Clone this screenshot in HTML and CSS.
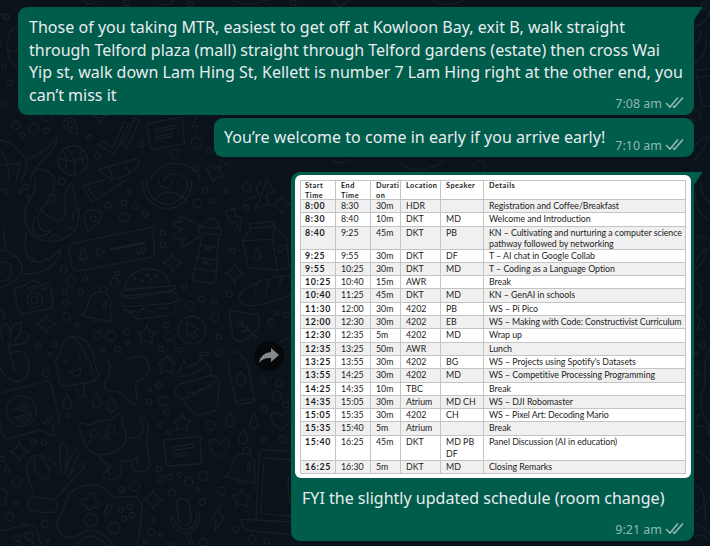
FILE: index.html
```html
<!DOCTYPE html>
<html lang="en">
<head>
<meta charset="utf-8">
<title>Chat</title>
<link rel="stylesheet" href="styles.css">
</head>
<body>
<svg class="wallpaper" width="710" height="546" viewBox="0 0 710 546" aria-hidden="true">
  <defs>
    <path id="spark" d="M0-30Q4-6 30 0Q5 6 0 30Q-5 6-30 0Q-5-6 0-30Z"/>
    <path id="star" d="M0-27L9-10L27-8L15 7L18 26L0 18L-18 25L-14 6L-27-7L-8-10Z"/>
    <path id="drop" d="M0-22Q-15 2-13 10Q-10 22 0 22Q13 20 13 8Q12-2 0-22Z"/>
    <path id="bolt" d="M6-40L-20 6L-5 5L-10 40L20-8L4-7Z"/>
    <path id="bell" d="M-60 30Q-40 18-38-5Q-32-40 0-40Q30-36 30-8Q26 20 32 50ZM-26 40Q-18 56-2 46M-4-40a12 12 0 1 1 16 4M12-14Q20-20 18 0Q12 18 8 4Z"/>
    <path id="heart" d="M0 30Q-34 4-28-14Q-16-34 2-12Q20-34 32-16Q36 4 0 30Z"/>
    <path id="ticks" d="M-16 2L-6 12L8-14M0 8L4 12L18-14"/>
  </defs>
  <g transform="scale(.33333)">
    <path d="M52 80Q22 84 22 150Q26 190 54 202M0 128Q10 132 0 142M20 148Q40 160 54 146M0 46Q20 36 28 50Q20 62 8 54M250 0Q262 22 290 4M480 10Q510 24 520 0M700 2Q760 24 800 0M1000 0L1020 20L1050 0M1300 4Q1340 24 1390 0"/>
    <path d="M190 368Q196 350 216 354Q236 364 232 404Q194 396 190 368ZM202 374a10 10 0 1 0 20 0a10 10 0 1 0-20 0M294 434L308 422L338 444L372 366L386 372L344 462ZM362 430L374 424L404 354L418 360L380 446ZM442 372L550 350L546 364L554 430L462 448Q450 448 450 436L440 382ZM462 390L526 376L528 384L464 398ZM468 410L514 400L516 408L470 418ZM590 350L576 380L596 378L584 400"/>
    <circle cx="219" cy="482" r="44"/><path d="M176 476Q220 490 262 470M200 442Q230 476 224 526M188 450Q210 490 190 512M248 450Q234 470 256 500M0 420Q40 426 64 462L80 480Q130 460 172 412Q170 450 120 490Q98 510 92 540M76 482Q90 506 62 540M0 450Q30 490 26 540M104 510Q140 500 164 536M0 496L60 490L50 540M292 510L400 478Q424 476 416 494Q390 530 336 538ZM326 504L340 538M376 488L388 520M450 540Q480 480 540 492Q590 500 602 540M490 540Q520 502 560 540"/>
    <path d="M620 508l14-14l8 12l22-8l-6 18l14 14l-22 2l-12 12l-8-20ZM660 480l30 20M1000 484Q1030 494 1050 480M1200 490Q1260 530 1330 484M1420 500a18 18 0 1 0 36 0a18 18 0 1 0-36 0"/>
    <use href="#spark" x="298" y="342"/>
    <circle cx="48" cy="375" r="12"/><circle cx="100" cy="385" r="15"/><circle cx="67" cy="406" r="7"/><circle cx="140" cy="392" r="8"/><circle cx="267" cy="412" r="7"/><circle cx="292" cy="469" r="8"/><circle cx="424" cy="433" r="8"/><circle cx="525" cy="460" r="12"/><circle cx="590" cy="429" r="16"/><circle cx="626" cy="452" r="8"/><circle cx="587" cy="506" r="9"/><circle cx="140" cy="348" r="16"/><circle cx="14" cy="312" r="8"/><circle cx="30" cy="248" r="8"/><circle cx="12" cy="198" r="7"/><circle cx="19" cy="50" r="8"/><circle cx="380" cy="8" r="9"/><circle cx="570" cy="12" r="8"/><circle cx="880" cy="8" r="8"/>
    <path d="M2082 82Q2122 70 2130 30M2082 190Q2120 170 2120 110M2080 130Q2106 124 2102 92M2090 210L2130 206M2090 222L2108 320L2130 318M2094 232L2130 228M2082 440Q2108 410 2126 406Q2120 440 2082 480M2074 510Q2092 520 2090 540"/>
    <circle cx="2086" cy="346" r="16"/><circle cx="2112" cy="18" r="9"/>
  </g>
  <g transform="translate(0 180) scale(.33333)">
    <path d="M104 0Q110 30 92 54Q60 98 84 148Q108 184 156 184Q240 180 236 90Q220 50 218 10Q194 14 196 70Q202 110 180 122Q150 118 124 92M164 0Q166 40 130 80Q104 110 120 142Q130 160 152 152Q138 174 110 164Q86 148 106 114M80 154Q68 200 86 238Q130 264 182 206Q170 284 64 282M0 210Q40 210 64 252Q76 300 0 322M0 246Q34 244 36 268Q34 302 0 306M16 144Q6 174 20 208M146 44Q166 40 164 62Q150 74 140 60M110 86Q126 74 130 94M148 178Q164 150 184 180M198 150Q206 134 218 148M232 90Q212 94 220 118M84 228Q100 226 104 248M130 246Q140 228 148 242M36 232Q48 222 60 242"/>
    <path d="M310 0L248 18L276 66L378 0M264 24L286 52M428 0a72 76 0 0 0 146 16V0M440 0a60 64 0 0 0 122 14V0M476 0a19 19 0 0 0 40 6V0M466 64Q474 36 510 36Q548 40 558 66M750 56L778 44L768 26L786 0M800 0L824 36L800 44L806 74L764 86L780 60Z"/>
    <path d="M264 156Q248 112 256 98Q278 80 304 100Q308 122 264 156ZM272 116a8 8 0 1 0 16 0a8 8 0 1 0-16 0M218 190L464 140L458 158L464 220Q462 230 450 232L232 274Q220 274 216 260L206 204Q206 194 218 190ZM240 210q8-12 16 0l2 24q-8 10-14 0ZM236 230Q246 252 268 228M252 246L256 258M288 204L316 214L294 232ZM332 206L434 186L434 190L332 210ZM408 212l8 12l10-20M420 214l8 8l10-20"/>
    <path d="M608 140L540 106Q536 118 548 128Q528 122 520 134Q534 146 550 148Q520 156 520 172Q540 180 556 176Q540 192 544 204L602 170M612 140Q612 116 636 116Q656 118 656 144M596 142L660 146Q672 152 660 164L598 158ZM608 162L578 292Q580 306 602 306L638 310Q648 308 648 292L656 164M598 194L654 204M588 232L650 240M582 266L648 274M614 204Q626 190 634 210ZM608 250Q618 236 628 254Z"/>
    <path d="M676 94L704 84L706 106L726 118L720 152L708 126L688 124ZM748 132L820 124L824 138L752 146ZM752 146L728 182L744 264L832 270L868 262L860 178L824 138M728 182L818 178L824 138M818 178L832 270M832 204L854 192L856 206L836 218ZM772 202Q758 220 762 236Q774 246 782 232Q784 218 772 202Z"/>
    <path d="M720 342Q712 370 740 376Q780 382 874 344M720 342Q750 312 770 310L764 344M770 310Q790 292 806 302L798 338M806 302Q822 284 846 290L834 326M846 290Q864 284 874 290"/>
    <path d="M374 328Q374 288 426 268Q500 260 510 318ZM368 332L522 316Q532 324 516 332L380 348Q352 344 368 332ZM366 350L390 356L520 334L540 360L512 370L388 380Q356 378 368 364M370 384Q380 404 396 396Q398 420 430 416L500 408Q530 394 528 376M380 390L414 398L430 384L458 398L474 382L500 386"/>
    <path d="M48 324L76 316L82 306L110 302L124 314L142 308Q152 310 152 320L160 376Q158 384 148 386L66 402Q56 400 54 390L44 336ZM84 322L112 318V326L86 330Z"/><circle cx="104" cy="360" r="23"/><circle cx="104" cy="360" r="10"/><circle cx="132" cy="324" r="7"/>
    <use href="#bell" x="302" y="376"/><use href="#spark" x="518" y="248"/><use href="#spark" x="704" y="280"/><use href="#spark" x="846" y="74"/><use href="#spark" x="138" y="432"/><use href="#star" x="440" y="464"/>
    <circle cx="576" cy="450" r="42"/><path d="M558 426L596 448L582 454L592 472L582 476L572 460L564 470ZM688 392Q748 400 774 404Q790 440 752 464Q716 500 698 470Q694 440 688 392ZM708 418L756 458L774 476M726 420L730 436L710 440M744 434L744 450L724 456M756 466L766 478"/>
    <path d="M8 480Q-4 440 14 430Q34 440 30 480M30 460Q40 430 62 426Q70 450 44 484M44 484Q70 440 88 466Q80 500 24 494M24 490L34 540M34 520Q70 500 84 540M172 540Q170 524 184 518Q180 480 216 468Q270 470 284 540M212 466Q250 490 260 540M236 520L240 540M376 540Q420 520 446 540M484 540L506 526L516 540M596 520Q614 510 628 522Q612 534 596 520M696 520Q704 508 722 524L736 540M524 506q18-8 24 8q-18 6-24-8M820 494L874 474M830 510L874 492M0 384Q14 400 12 420"/>
    <circle cx="372" cy="112" r="14"/><circle cx="323" cy="76" r="9"/><circle cx="371" cy="68" r="8"/><circle cx="407" cy="79" r="9"/><circle cx="436" cy="102" r="8"/><circle cx="388" cy="34" r="6"/><circle cx="592" cy="70" r="13"/><circle cx="634" cy="63" r="7"/><circle cx="615" cy="30" r="8"/><circle cx="679" cy="31" r="7"/><circle cx="740" cy="20" r="13"/><circle cx="738" cy="83" r="8"/><circle cx="489" cy="158" r="8"/><circle cx="489" cy="194" r="8"/><circle cx="697" cy="212" r="8"/><circle cx="191" cy="267" r="10"/><circle cx="213" cy="302" r="14"/><circle cx="256" cy="295" r="7"/><circle cx="351" cy="280" r="7"/><circle cx="343" cy="307" r="13"/><circle cx="193" cy="338" r="8"/><circle cx="242" cy="335" r="8"/><circle cx="198" cy="370" r="9"/><circle cx="200" cy="410" r="11"/><circle cx="232" cy="434" r="6"/><circle cx="553" cy="318" r="8"/><circle cx="606" cy="357" r="9"/><circle cx="571" cy="377" r="13"/><circle cx="643" cy="366" r="7"/><circle cx="688" cy="342" r="9"/><circle cx="645" cy="413" r="12"/><circle cx="657" cy="470" r="8"/><circle cx="498" cy="435" r="8"/><circle cx="507" cy="468" r="14"/><circle cx="380" cy="457" r="9"/><circle cx="333" cy="468" r="15"/><circle cx="292" cy="466" r="12"/><circle cx="383" cy="488" r="6"/><circle cx="352" cy="507" r="8"/><circle cx="308" cy="510" r="6"/><circle cx="482" cy="507" r="8"/><circle cx="657" cy="520" r="10"/><circle cx="813" cy="427" r="10"/><circle cx="831" cy="398" r="6"/><circle cx="860" cy="404" r="8"/><circle cx="115" cy="497" r="7"/><circle cx="164" cy="493" r="8"/><circle cx="150" cy="523" r="6"/><circle cx="79" cy="22" r="8"/><circle cx="60" cy="35" r="5"/><circle cx="84" cy="50" r="5"/><circle cx="185" cy="4" r="10"/><circle cx="17" cy="34" r="8"/>
    <circle cx="404" cy="296" r="4"/><circle cx="426" cy="302" r="4"/><circle cx="442" cy="286" r="4"/><circle cx="470" cy="288" r="4"/><circle cx="454" cy="302" r="4"/>
  </g>
  <g transform="translate(0 360) scale(.33333)">
    <path d="M0 24Q22 62 54 66Q96 54 84 0M38 0Q36 22 48 34M166 0L180 70Q184 80 196 78L276 66Q286 58 280 44L268 0M280 0L296 44Q292 60 276 66M208 34Q226 32 242 24Q244 46 230 48Q218 48 214 34M226 74L234 104Q242 118 254 106L250 72M190 8l10-6M236 0l10 4"/>
    <path d="M320 0Q340 14 322 54Q304 78 320 92Q344 92 360 98Q390 128 402 136Q416 130 406 70Q440 54 448 28Q446 6 440 0M534 46Q530 36 544 28Q540 14 556 8Q548 0 552-6M556 22Q590 18 604-8M534 48Q570 54 624 14Q614-2 600-2M624 14Q644 30 628 48M540 72Q520 84 526 104Q540 124 572 110Q622 80 654 60Q652 44 628 48L540 72M544 116L582 160Q592 168 606 164L648 150Q656 144 656 60M560 106l14-12l10 8l14-14l12 4l14-16l12 2M688 0Q682 20 690 44L708 128Q712 136 722 132L760 126Q768 120 762 108L740 0M708 124L760 116M722 36Q704 58 710 70Q724 82 736 68Q738 54 722 36"/>
    <path d="M0 100L134 64Q150 62 154 78L178 176Q182 190 158 196L164 230L118 210L26 236Q12 238 8 220L0 190M34 150q10-8 22 0M40 172Q66 170 94 156Q94 186 72 188Q52 186 50 172M58 172l6 10l8-12l8 6l6-14"/><circle cx="64" cy="153" r="45"/><circle cx="76" cy="141" r="14"/><circle cx="76" cy="141" r="5"/>
    <use href="#ticks" x="140" y="180"/>
    <path d="M246 230L236 196Q240 184 266 196Q300 178 336 180L354 160Q368 166 368 192Q384 220 376 244Q366 276 310 284Q260 286 246 230ZM376 236Q410 236 422 224Q438 200 416 176Q432 164 442 190Q448 220 438 242L450 310Q450 336 420 336Q396 334 394 318L404 296M296 286Q304 306 324 312Q326 336 310 340Q308 356 330 358Q358 358 362 344L366 300M366 302Q390 306 416 292Q404 312 420 318M336 318q-16 6-8 26M300 228l8 8l10-14l10 14M304 240q14 6 16-6M264 244l12 4M350 222l10-2"/><circle cx="282" cy="221" r="11"/><circle cx="332" cy="209" r="12"/>
    <path d="M494 240L606 228L600 244L604 302Q604 312 594 312L510 318Q500 318 498 306L492 250ZM516 262L578 252Q584 256 578 262L518 272ZM520 284L562 278Q568 282 562 286L522 290Z"/>
    <path d="M104 286Q150 280 180 336Q190 346 182 320Q174 270 184 250Q202 248 202 280L196 340Q210 280 232 266Q242 274 230 300L204 352Q234 310 252 310Q262 320 220 356Q190 392 166 416M104 286Q80 300 80 330Q92 380 102 408M106 290Q98 320 110 336Q130 366 146 352Q158 326 118 286M98 410L164 420Q178 430 166 456Q130 462 92 450Q76 440 90 416Z"/>
    <path d="M210 400Q240 370 290 376Q320 384 344 414Q388 404 412 414Q430 430 426 460L412 558M210 400L172 486Q170 526 206 534Q230 530 256 514Q300 500 340 558M234 558Q240 530 272 528Q310 536 322 558M244 418L262 416L266 398L284 400L284 420L298 426L294 444L278 442L266 452L258 436L246 434ZM324 430L338 436L322 468L312 462Z"/><circle cx="272" cy="480" r="19"/><circle cx="342" cy="504" r="18"/><circle cx="362" cy="450" r="8"/><circle cx="387" cy="441" r="8"/><circle cx="372" cy="476" r="8"/><circle cx="397" cy="466" r="8"/>
    <path d="M0 512L90 494Q106 494 110 510L124 558M36 532q24-12 26 0q0 10-16 12q24 0 16 14M74 520q20-8 26 4q0 14-14 16q-16-4-12-20M84 542q20-2 20 16M62 494q8-8 18-2M0 384Q20 384 20 402Q12 414 20 424Q16 436 0 432M530 430Q528 416 550 416Q568 418 568 434L574 476Q574 494 554 496Q538 494 536 482ZM512 474Q520 516 556 520Q600 512 600 460L590 462Q590 500 558 508Q530 508 522 474ZM558 520L568 550L578 548L570 516M778 280Q780 268 800 270L874 274M778 280L768 478M792 300Q794 292 806 294L874 300M792 300L782 456Q786 464 874 468M724 478Q724 510 750 512L874 524M724 478L874 486M866 350Q860 400 874 440"/>
    <use href="#heart" x="656" y="262"/><use href="#heart" x="842" y="180"/><use href="#drop" x="202" y="126"/><use href="#drop" x="290" y="122"/><use href="#drop" x="336" y="134"/><use href="#drop" x="690" y="178"/><use href="#drop" x="762" y="184"/><use href="#drop" x="730" y="230"/><use href="#spark" x="58" y="274"/><use href="#spark" x="460" y="418"/><use href="#star" x="500" y="14"/><use href="#star" x="546" y="188"/><use href="#star" x="724" y="414"/><use href="#bell" x="734" y="320"/><use href="#bolt" x="654" y="474"/>
    <circle cx="138" cy="40" r="11"/><circle cx="204" cy="166" r="7"/><circle cx="101" cy="245" r="7"/><circle cx="132" cy="247" r="8"/><circle cx="7" cy="296" r="7"/><circle cx="22" cy="329" r="8"/><circle cx="51" cy="365" r="15"/><circle cx="48" cy="429" r="6"/><circle cx="29" cy="471" r="12"/><circle cx="134" cy="492" r="10"/><circle cx="143" cy="541" r="5"/><circle cx="478" cy="76" r="9"/><circle cx="450" cy="89" r="5"/><circle cx="448" cy="126" r="8"/><circle cx="490" cy="123" r="15"/><circle cx="501" cy="157" r="8"/><circle cx="480" cy="195" r="7"/><circle cx="505" cy="218" r="6"/><circle cx="631" cy="196" r="14"/><circle cx="791" cy="63" r="7"/><circle cx="838" cy="69" r="10"/><circle cx="832" cy="107" r="14"/><circle cx="857" cy="134" r="9"/><circle cx="792" cy="146" r="9"/><circle cx="791" cy="237" r="7"/><circle cx="849" cy="238" r="11"/><circle cx="477" cy="328" r="8"/><circle cx="483" cy="358" r="10"/><circle cx="511" cy="350" r="8"/><circle cx="538" cy="344" r="7"/><circle cx="566" cy="365" r="13"/><circle cx="610" cy="348" r="14"/><circle cx="592" cy="388" r="6"/><circle cx="517" cy="398" r="10"/><circle cx="404" cy="379" r="14"/><circle cx="366" cy="390" r="8"/><circle cx="607" cy="426" r="9"/><circle cx="664" cy="393" r="12"/><circle cx="461" cy="480" r="7"/><circle cx="453" cy="516" r="11"/><circle cx="482" cy="524" r="6"/><circle cx="435" cy="545" r="6"/><circle cx="610" cy="547" r="12"/><circle cx="707" cy="508" r="9"/><circle cx="757" cy="537" r="12"/><circle cx="801" cy="544" r="8"/><circle cx="518" cy="556" r="9"/>
  </g>
  <g transform="translate(500 170) scale(.33333)">
    <path d="M586 60Q580 130 630 150M600 40Q610 90 630 96M586 206q14-20 20 0q20-10 24 12M584 290Q600 240 622 234Q620 270 584 300M584 338q16 0 18 14v50q-4 14-18 12M584 430l18 20l-10 28"/>
    <circle cx="608" cy="524" r="9"/><circle cx="588" cy="552" r="5"/><circle cx="588" cy="610" r="8"/><path d="M630 530Q610 560 616 640Q590 700 616 750Q630 760 624 790M586 770Q620 760 630 790M586 850Q600 830 630 880M586 740l14-8l-12 20M592 480l24-8l-6-22"/>
    <path d="M584 950q24 0 28 30q2 40-28 46M630 984Q606 1000 620 1060M590 1060L630 1090M586 1100q20-14 40 10"/>
  </g>
</svg>

<main class="chat">
  <section class="bubble bubble-directions">
    <svg class="tail" width="9" height="14" viewBox="0 0 9 14"><path d="M0 0H8Q9.600 0 8.500 1.800L1 13V14H0Z"/></svg>
    <p class="message"><span class="loose">Those of you taking MTR, easiest to get off at Kowloon Bay, exit B, walk straight</span><br>through Telford plaza (mall) straight through Telford gardens (estate) then cross Wai<br><span class="snug">Yip st, walk down Lam Hing St, Kellett is number 7 Lam Hing right at the other end, you</span><br>can’t miss it</p>
    <div class="meta"><span>7:08 am</span><svg width="19" height="13" viewBox="0 0 19 13"><path d="M1 7L5 11L13 1.500M8 10L9.300 11.300L18 1.500"/></svg></div>
  </section>

  <section class="bubble bubble-welcome">
    <p class="message loose">You’re welcome to come in early if you arrive early!</p>
    <div class="meta"><span>7:10 am</span><svg width="19" height="13" viewBox="0 0 19 13"><path d="M1 7L5 11L13 1.500M8 10L9.300 11.300L18 1.500"/></svg></div>
  </section>

  <section class="bubble bubble-schedule">
    <svg class="tail" width="9" height="14" viewBox="0 0 9 14"><path d="M0 0H8Q9.600 0 8.500 1.800L1 13V14H0Z"/></svg>
    <button class="forward" aria-label="Forward"><svg width="20" height="16" viewBox="0 0 20 16"><path d="M12 0L20 7L12 14V10Q4 9.500 0 15Q1.500 5 12 4Z"/></svg></button>
    <div class="picture">
      <div class="schedule">
        <div class="row head"><b>Start<br>Time</b><span>End<br>Time</span><span>Durati<br>on</span><span>Location</span><span>Speaker</span><span>Details</span></div>
        <div class="row"><b>8:00</b><span>8:30</span><span>30m</span><span>HDR</span><span></span><span>Registration and Coffee/Breakfast</span></div>
        <div class="row"><b>8:30</b><span>8:40</span><span>10m</span><span>DKT</span><span>MD</span><span>Welcome and Introduction</span></div>
        <div class="row tall"><b>8:40</b><span>9:25</span><span>45m</span><span>DKT</span><span>PB</span><span>KN – Cultivating and nurturing a computer science<br>pathway followed by networking</span></div>
        <div class="row"><b>9:25</b><span>9:55</span><span>30m</span><span>DKT</span><span>DF</span><span>T – AI chat in Google Collab</span></div>
        <div class="row"><b>9:55</b><span>10:25</span><span>30m</span><span>DKT</span><span>MD</span><span>T – Coding as a Language Option</span></div>
        <div class="row"><b>10:25</b><span>10:40</span><span>15m</span><span>AWR</span><span></span><span>Break</span></div>
        <div class="row"><b>10:40</b><span>11:25</span><span>45m</span><span>DKT</span><span>MD</span><span>KN – GenAI in schools</span></div>
        <div class="row"><b>11:30</b><span>12:00</span><span>30m</span><span>4202</span><span>PB</span><span>WS – Pi Pico</span></div>
        <div class="row"><b>12:00</b><span>12:30</span><span>30m</span><span>4202</span><span>EB</span><span class="tight">WS – Making with Code: Constructivist Curriculum</span></div>
        <div class="row"><b>12:30</b><span>12:35</span><span>5m</span><span>4202</span><span>MD</span><span>Wrap up</span></div>
        <div class="row"><b>12:35</b><span>13:25</span><span>50m</span><span>AWR</span><span></span><span>Lunch</span></div>
        <div class="row"><b>13:25</b><span>13:55</span><span>30m</span><span>4202</span><span>BG</span><span>WS – Projects using Spotify's Datasets</span></div>
        <div class="row"><b>13:55</b><span>14:25</span><span>30m</span><span>4202</span><span>MD</span><span>WS – Competitive Processing Programming</span></div>
        <div class="row"><b>14:25</b><span>14:35</span><span>10m</span><span>TBC</span><span></span><span>Break</span></div>
        <div class="row"><b>14:35</b><span>15:05</span><span>30m</span><span>Atrium</span><span>MD CH</span><span>WS – DJI Robomaster</span></div>
        <div class="row"><b>15:05</b><span>15:35</span><span>30m</span><span>4202</span><span>CH</span><span class="tight">WS – Pixel Art: Decoding Mario</span></div>
        <div class="row"><b>15:35</b><span>15:40</span><span>5m</span><span>Atrium</span><span></span><span>Break</span></div>
        <div class="row panel"><b>15:40</b><span>16:25</span><span>45m</span><span>DKT</span><span>MD PB<br>DF</span><span>Panel Discussion (AI in education)</span></div>
        <div class="row"><b>16:25</b><span>16:30</span><span>5m</span><span>DKT</span><span>MD</span><span>Closing Remarks</span></div>
      </div>
    </div>
    <p class="message caption">FYI the slightly updated schedule (room change)</p>
    <div class="meta"><span>9:21 am</span><svg width="19" height="13" viewBox="0 0 19 13"><path d="M1 7L5 11L13 1.500M8 10L9.300 11.300L18 1.500"/></svg></div>
  </section>
</main>
</body>
</html>
```
FILE: styles.css
```css
* { box-sizing: border-box; }
body {
  margin: 0;
  width: 710px;
  height: 546px;
  overflow: hidden;
  background: #0b131a;
  font-family: "Noto Sans", "Open Sans", sans-serif;
}
.wallpaper {
  position: absolute;
  inset: 0;
  fill: none;
  stroke: #161f25;
  stroke-width: 4;
  stroke-linejoin: round;
  stroke-linecap: round;
}
.chat {
  position: relative;
  display: flex;
  flex-direction: column;
  align-items: flex-end;
  padding: 7px 16px 0 0;
}
.bubble {
  position: relative;
  background: #005c4b;
  color: #e9edef;
  border-radius: 9px;
}
.bubble-directions { width: 676px; height: 108px; padding: 9px 11px; border-top-right-radius: 0; }
.bubble-welcome { width: 480px; height: 39px; margin-top: 3px; padding: 8px 10px; }
.bubble-schedule { width: 403px; height: 369px; margin-top: 15px; padding: 3px 3px 0 4px; border-top-right-radius: 0; }
.tail { position: absolute; left: 100%; top: 0; margin-left: -1px; fill: #005c4b; }
.message {
  margin: 0;
  font-size: 16px;
  line-height: 22.700px;
  white-space: nowrap;
}
.loose { letter-spacing: .03px; }
.snug { letter-spacing: .012px; }
.caption { padding: 9px 0 0 7px; letter-spacing: .01px; }
.meta {
  position: absolute;
  right: 9px;
  bottom: 3px;
  display: flex;
  align-items: center;
  gap: 4px;
  font-size: 12.500px;
  line-height: 17px;
  color: #8dbab1;
  white-space: nowrap;
}
.meta svg { margin: 0 1px 2px -1px; fill: none; stroke: #8dbab1; stroke-width: 1.600; }
.forward {
  position: absolute;
  left: -37px;
  top: 169px;
  width: 30px;
  height: 30px;
  display: flex;
  align-items: center;
  justify-content: center;
  padding: 0;
  border: 0;
  border-radius: 50%;
  background: #05090c;
}
.forward svg { fill: #84888a; }
.picture {
  width: 396px;
  height: 303px;
  padding: 5px;
  border-radius: 6px;
  background: #fff;
}
.schedule {
  width: 386px;
  border: 1px solid #c4c4c4;
  border-width: 1px 0 0 1px;
  color: #1c1c1c;
  font-family: Lato, "Open Sans", sans-serif;
  font-size: 8.800px;
  font-variant-ligatures: none;
  line-height: 11.500px;
}
.row {
  display: grid;
  grid-template-columns: 35px 35px 30px 40px 43px 202px;
  height: 13.300px;
  white-space: nowrap;
}
.row > * { border: 0 solid #c4c4c4; border-width: 0 1px 1px 0; padding-left: 5px; overflow: hidden; }
.row > :last-child { letter-spacing: -.04px; }
.row > .tight { letter-spacing: -.09px; }
.row:nth-child(even) { background: #f0f0f0; }
.row b { font-weight: 700; letter-spacing: .65px; padding-left: 4px; }
.head { height: 19px; font-size: 7.300px; line-height: 9.700px; font-weight: 700; letter-spacing: .45px; }
.head > :last-child, .head b { letter-spacing: .5px; }
.tall { height: 23px; line-height: 11.500px; }
.panel { height: 25px; line-height: 12.500px; }
```
